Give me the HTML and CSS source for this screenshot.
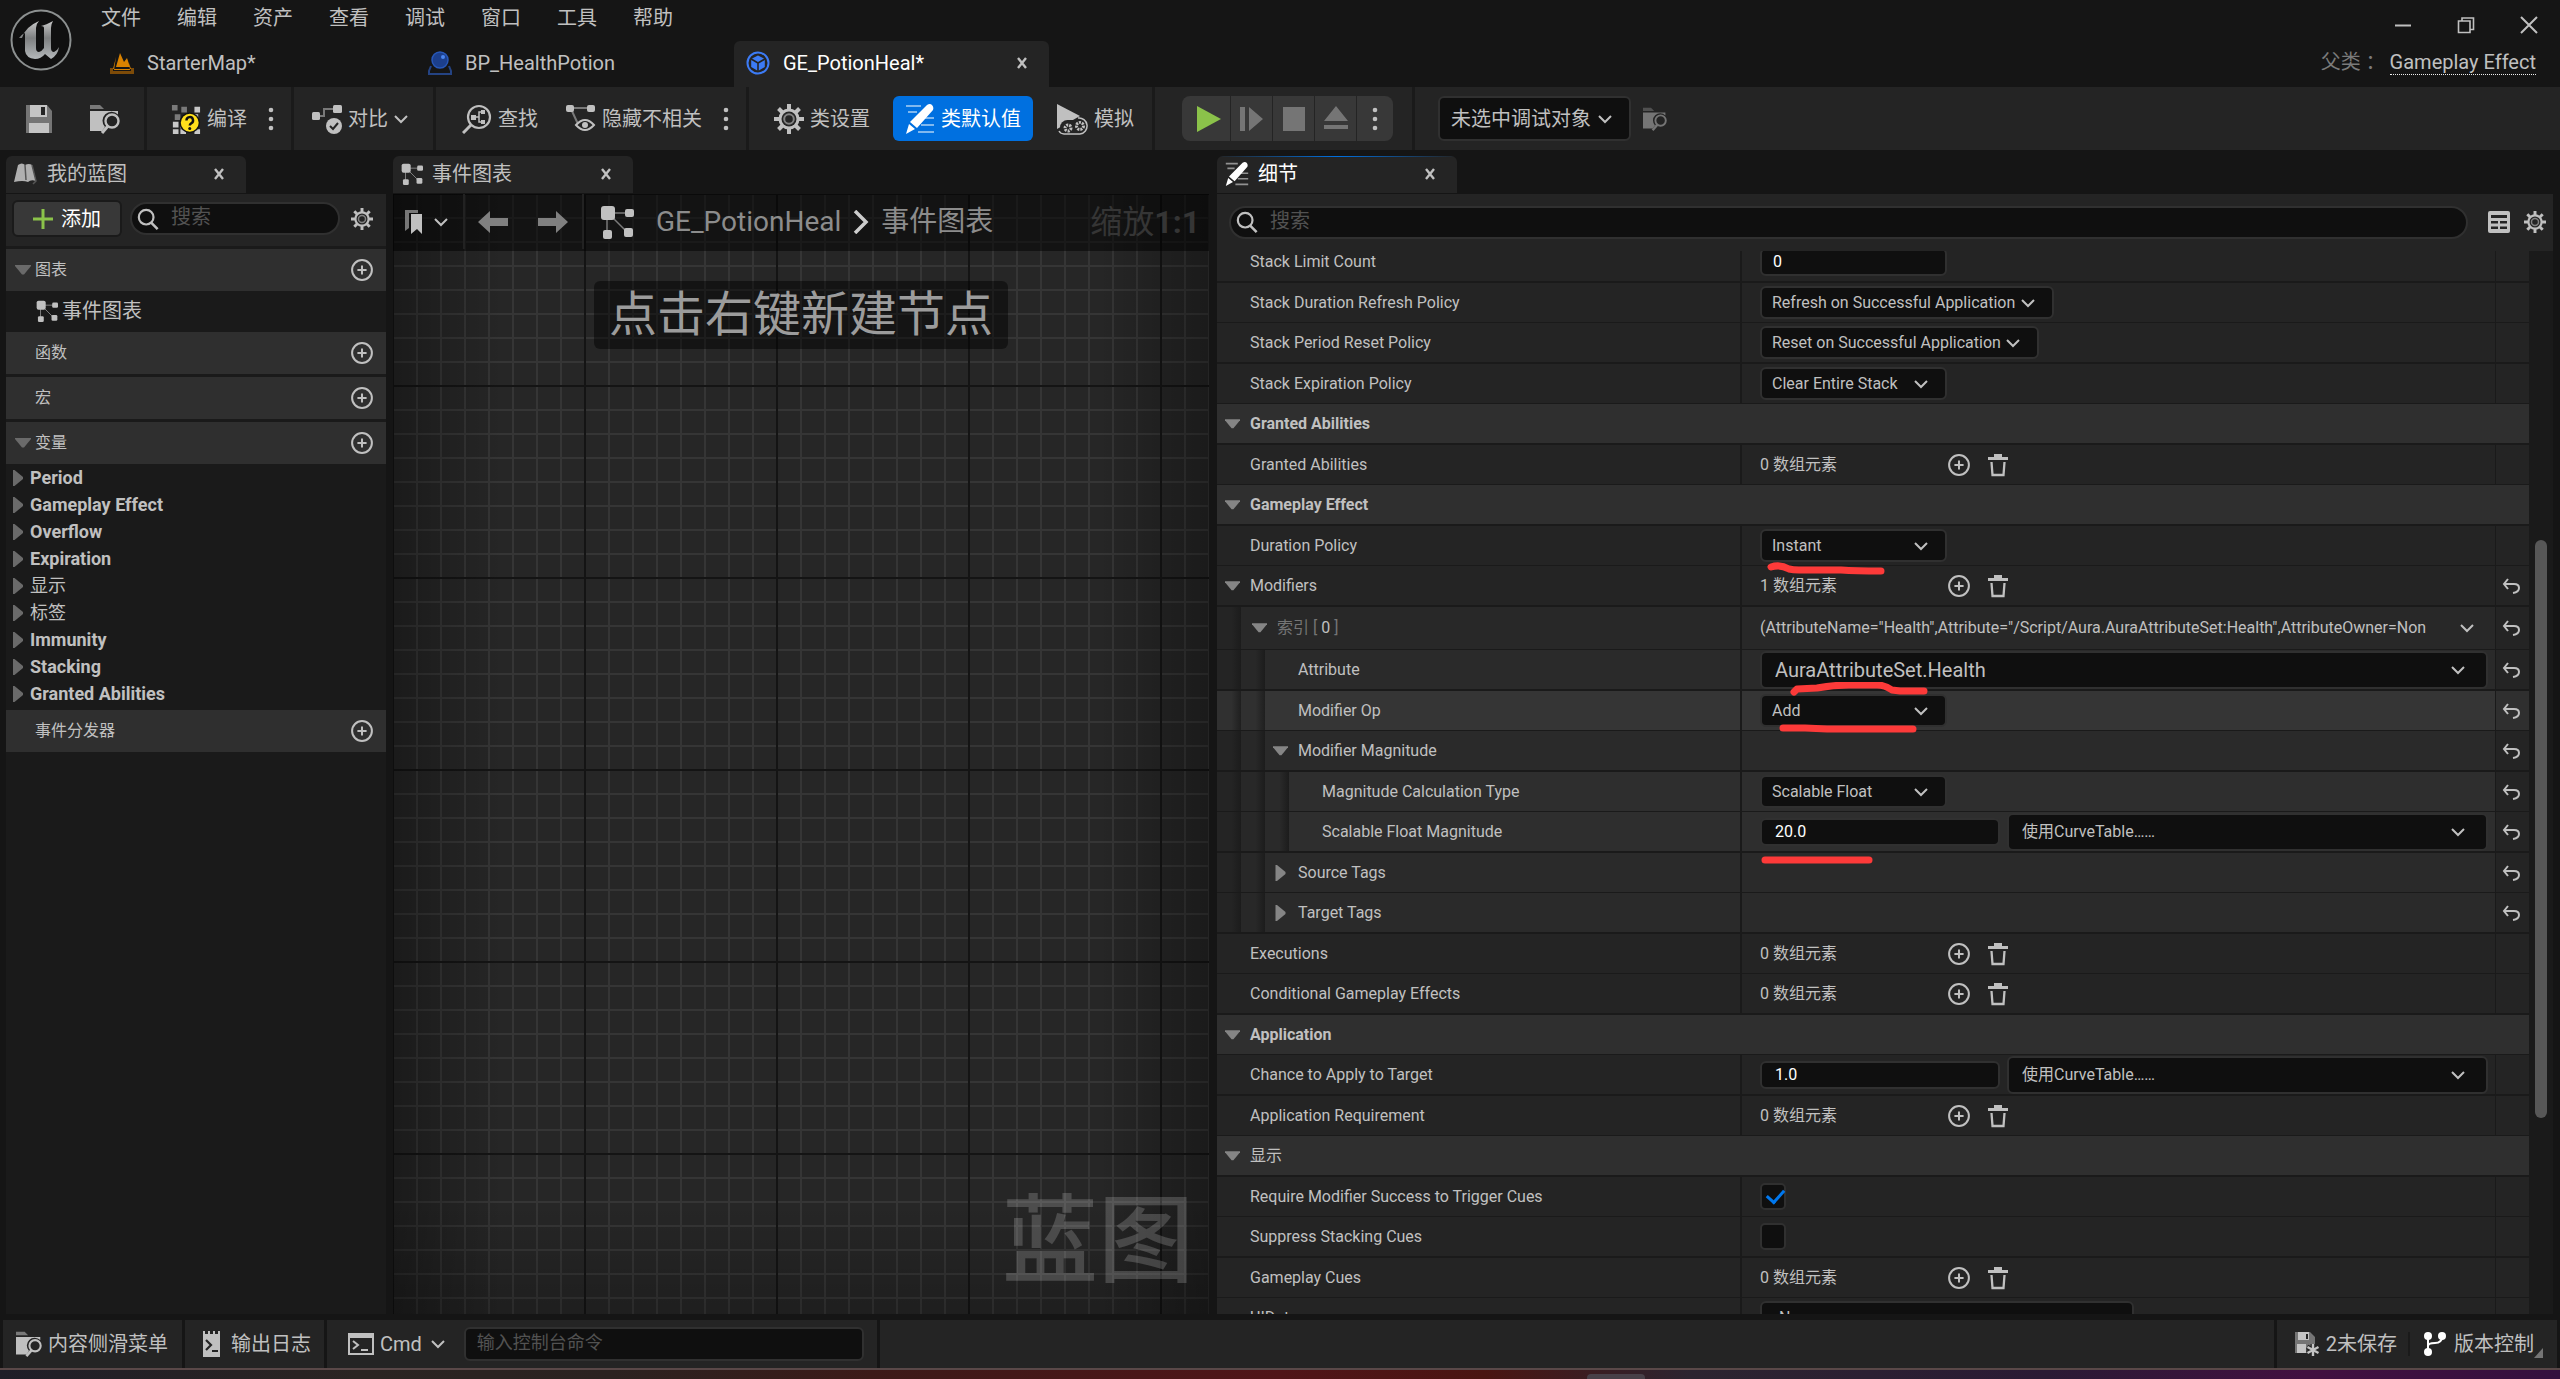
FILE: index.html
```html
<!DOCTYPE html>
<html lang="zh-CN">
<head>
<meta charset="utf-8">
<title>GE_PotionHeal</title>
<link rel="stylesheet" href="styles.css">
</head>
<body>
<svg class="defs" aria-hidden="true">
  <defs>
    <linearGradient id="steel" x1="0" y1="0" x2="0" y2="1"><stop offset="0" stop-color="#c8c8c8"/><stop offset=".45" stop-color="#7d7f80"/><stop offset="1" stop-color="#b4b8ba"/></linearGradient>
    <symbol id="i-chev" viewBox="0 0 14 10"><path d="M1 2l6 6 6-6" fill="none" stroke="currentColor" stroke-width="2"/></symbol>
    <symbol id="i-x" viewBox="0 0 12 12"><path d="M2 1l8 10M10 1L2 11" fill="none" stroke="currentColor" stroke-width="2.4"/></symbol>
    <symbol id="i-dots" viewBox="0 0 8 24"><circle cx="4" cy="3" r="2.3"/><circle cx="4" cy="12" r="2.3"/><circle cx="4" cy="21" r="2.3"/></symbol>
    <symbol id="i-save" viewBox="0 0 30 30"><path d="M2 1h21l5 6v22H2z" fill="#757575"/><path d="M6 1h17v12H6z" fill="#c4c4c4"/><path d="M17 3h4v8h-4z" fill="#242424"/><path d="M5 19h20v10H5z" fill="#c4c4c4"/></symbol>
    <symbol id="i-browse" viewBox="0 0 30 30"><path d="M0 1h10l4 4H0z" opacity=".55"/><path d="M0 7h28v3.500a9 9 0 0 0-13 12.500l-3 4H0z"/><circle cx="22" cy="17" r="6.500" fill="none" stroke="currentColor" stroke-width="2.400"/><path d="M18 22l-6 7" stroke="currentColor" stroke-width="3"/></symbol>
    <symbol id="i-compile" viewBox="0 0 30 32"><g fill="#7a7a7a"><path d="M0 1h6v6H0zM10 3h6v6h-6zM3 11h6v6H3z"/></g><g fill="#c8c8c8"><path d="M24 3h6v6h-6zM1 19h6v6H1zM1 27h6v5H1zM9 21h5v5H9zM9 27h6v5H9zM22 11h6v5h-6zM24 27h6v5h-6z"/></g><circle cx="19" cy="20" r="11" fill="#111"/><circle cx="19" cy="20" r="9.500" fill="#ffdf1b"/><path d="M15.500 17.500a3.500 3.500 0 1 1 5 3.100q-1.500.8-1.500 2.400" fill="none" stroke="#111" stroke-width="2.600"/><circle cx="19" cy="26" r="1.600" fill="#111"/></symbol>
    <symbol id="i-diff" viewBox="0 0 30 30"><path d="M7 12h5V5h9" fill="none" stroke="currentColor" opacity=".55" stroke-width="2"/><rect x="0" y="8" width="8" height="8" rx="1.500"/><rect x="21" y="1" width="9" height="8" rx="1.500"/><circle cx="22" cy="22" r="8"/><path d="M18 22l3 3 5-6" fill="none" stroke="#242424" stroke-width="2"/></symbol>
    <symbol id="i-find" viewBox="0 0 30 30"><circle cx="17" cy="13" r="11" fill="none" stroke="currentColor" stroke-width="2.200"/><path d="M9 21l-8 8" stroke="currentColor" stroke-width="3"/><rect x="9" y="11" width="5" height="5"/><path d="M14 13h3M21 8h-4v10h4" fill="none" stroke="currentColor" stroke-width="1.500"/><path d="M19 6h4v4h-4zM19 16h4v4h-4z"/></symbol>
    <symbol id="i-hide" viewBox="0 0 30 30"><path d="M4 4h20M5 5l7 15" stroke="currentColor" stroke-width="2" opacity=".55"/><rect x="0" y="1" width="8" height="7" rx="2"/><rect x="21" y="1" width="8" height="7" rx="2"/><path d="M10 21q9-10 18 0q-9 10-18 0z" fill="none" stroke="currentColor" stroke-width="2"/><circle cx="19" cy="21" r="3"/></symbol>
    <symbol id="i-gear" viewBox="0 0 30 30"><g stroke="currentColor" stroke-width="4"><path d="M15 0v30M0 15h30M4.500 4.500l21 21M25.500 4.500l-21 21"/></g><circle cx="15" cy="15" r="10.500"/><circle cx="15" cy="15" r="7.500" fill="#242424"/><circle cx="15" cy="15" r="4.800" fill="none" stroke="currentColor" stroke-width="2" opacity=".6"/></symbol>
    <symbol id="i-pen" viewBox="0 0 30 30"><path d="M1 2h15M3 8h9M20 14h9M16 21h13M13 28h16" stroke="currentColor" stroke-width="2" opacity=".5"/><path d="M22 1q3-2 5 0t1 5L12 24l-7-6zM4 20l6 5-9 5z"/></symbol>
    <symbol id="i-sim" viewBox="0 0 32 32"><path d="M1 1l23 12L1 26z"/><rect x="4" y="17" width="28" height="15" rx="7.500" fill="#242424"/><path d="M22 15a8 8 0 1 1 2 16H8a6 6 0 0 1-5-3" fill="none" stroke="currentColor" stroke-width="1.500"/><circle cx="24" cy="23" r="3.500" fill="none" stroke="currentColor" stroke-width="3" stroke-dasharray="2 1"/><circle cx="12" cy="25" r="3" fill="none" stroke="currentColor" stroke-width="3" stroke-dasharray="2 1"/></symbol>
    <symbol id="i-graph" viewBox="0 0 34 34"><path d="M8 8h20M7 8v22M8 8l20 20" stroke="currentColor" stroke-width="1.500" opacity=".6"/><rect x="1" y="1" width="14" height="14" rx="3"/><rect x="25" y="4" width="9" height="8" rx="2"/><rect x="3" y="25" width="9" height="9" rx="2"/><rect x="24" y="23" width="9" height="9" rx="2"/></symbol>
    <symbol id="i-search" viewBox="0 0 24 24"><circle cx="10" cy="10" r="8" fill="none" stroke="currentColor" stroke-width="2.400"/><path d="M15.500 16l7 7" stroke="currentColor" stroke-width="2.800"/></symbol>
    <symbol id="i-add" viewBox="0 0 24 24"><circle cx="12" cy="12" r="10.800" fill="none" stroke="currentColor" stroke-width="2.200"/><path d="M12 7v10M7 12h10" stroke="currentColor" stroke-width="2.200"/></symbol>
    <symbol id="i-trash" viewBox="0 0 20 24"><path d="M6 1h8v3H6zM0 4h20v3H0z"/><path d="M3.500 9l1 13h11l1-13" fill="none" stroke="currentColor" stroke-width="2.300"/></symbol>
    <symbol id="i-reset" viewBox="0 0 18 16"><path d="M6 1L2 6l4 5M2 6h10q5 0 5 4t-6 5" fill="none" stroke="currentColor" stroke-width="2"/></symbol>
    <symbol id="i-down" viewBox="0 0 16 10"><path d="M0 0h16v1L9 9.500H7L0 1z"/></symbol>
    <symbol id="i-right" viewBox="0 0 10 16"><path d="M0 0h1.500L10 7v2l-8.500 7H0z"/></symbol>
    <symbol id="i-table" viewBox="0 0 22 22"><rect x="0" y="0" width="22" height="22" rx="2"/><path d="M3 4h16v3H3zM3 10h7v2.500H3zM12 10h7v2.500h-7zM3 15.500h7V18H3zM12 15.500h7V18h-7z" fill="#242424"/></symbol>
    <symbol id="i-arrow" viewBox="0 0 30 24"><path d="M0 12L12 1v7h18v8H12v7z"/></symbol>
  </defs>
</svg>

<header class="titlebar">
  <svg class="logo" viewBox="0 0 64 64" role="img" aria-label="Unreal"><circle cx="32" cy="32" r="29.500" fill="#101010" stroke="#8c9090" stroke-width="2"/><path fill="url(#steel)" d="M13 30Q16 19 30 13q-3 3-3 7v20q0 4 3 4 3-1 5-4V20q0-2-3-2 5-1 12-5-2 3-2 7v20q0 4 3 4 3-1 5-5-1 8-8 12l-6-5q-4 5-10 5-9-1-10-8V25q-3 1-6 5z"/></svg>
  <div class="title-main">
    <nav class="menu"><a href="#">文件</a><a href="#">编辑</a><a href="#">资产</a><a href="#">查看</a><a href="#">调试</a><a href="#">窗口</a><a href="#">工具</a><a href="#">帮助</a></nav>
    <div class="doc-tabs">
      <button class="doc-tab"><svg class="ic24" viewBox="0 0 24 24"><path d="M6 16L10 2l4 9 3-4 3 9z" fill="#d98200"/><path d="M6 6v0l-3 12h18l-2-6 1 7H4z" fill="#d98200"/><path d="M0 17h3v3h18v-3h3v6H0z" fill="#7d4b08"/></svg><span>StarterMap*</span></button>
      <button class="doc-tab"><svg class="ic24" viewBox="0 0 24 24"><path d="M3 15L1 20v3h22v-3l-2-5" fill="none" stroke="#244383" stroke-width="2"/><circle cx="12" cy="9" r="8" fill="#1c3f8c" stroke="#2757b8" stroke-width="1.500"/><circle cx="15" cy="6" r="2" fill="#4a86ef"/></svg><span>BP_HealthPotion</span></button>
      <button class="doc-tab active"><svg class="ic24" viewBox="0 0 24 24"><circle cx="12" cy="12" r="10.500" fill="none" stroke="#3c7bf5" stroke-width="2"/><path d="M12 4.500l6 3-6 3.500-6-3.500zM5.200 9l6 3.500v7l-6-3.500zM18.800 9l-6 3.500v7l6-3.500z" fill="#3c7bf5"/></svg><span>GE_PotionHeal*</span><svg class="close" viewBox="0 0 12 12"><use href="#i-x"/></svg></button>
    </div>
  </div>
  <div class="title-right">
    <div class="win-buttons">
      <button aria-label="最小化"><svg viewBox="0 0 18 18"><path d="M1 9.500h16" stroke="currentColor" stroke-width="2"/></svg></button>
      <button aria-label="还原"><svg viewBox="0 0 18 18"><path d="M1.500 5h11.500v11.500H1.500zM5 5V2h11.500v11.500H13" fill="none" stroke="currentColor" stroke-width="1.600"/></svg></button>
      <button aria-label="关闭"><svg viewBox="0 0 18 18"><path d="M1 1l16 16M17 1L1 17" stroke="currentColor" stroke-width="2"/></svg></button>
    </div>
    <div class="parent-class"><span>父类 ：</span><a href="#">Gameplay Effect</a></div>
  </div>
</header>

<div class="toolbar">
  <div class="tg tg-file"><button aria-label="保存"><svg class="ic30"><use href="#i-save"/></svg></button><button aria-label="浏览"><svg class="ic30"><use href="#i-browse"/></svg></button></div>
  <div class="tg tg-compile"><button><svg class="ic30"><use href="#i-compile"/></svg>编译</button><button aria-label="编译选项"><svg class="dots"><use href="#i-dots"/></svg></button></div>
  <div class="tg tg-diff"><button><svg class="ic30"><use href="#i-diff"/></svg>对比<svg class="chev"><use href="#i-chev"/></svg></button></div>
  <div class="tg tg-find"><button><svg class="ic30"><use href="#i-find"/></svg>查找</button><button class="hide"><svg class="ic30"><use href="#i-hide"/></svg>隐藏不相关</button><button aria-label="隐藏选项"><svg class="dots"><use href="#i-dots"/></svg></button></div>
  <div class="tg tg-class"><button><svg class="ic30"><use href="#i-gear"/></svg>类设置</button><button class="primary"><svg class="ic30"><use href="#i-pen"/></svg>类默认值</button><button><svg class="ic32"><use href="#i-sim"/></svg>模拟</button></div>
  <div class="tg tg-play"><div class="play-group">
    <button class="play" aria-label="播放"><svg viewBox="0 0 26 26"><path d="M1 0l24 13L1 26z"/></svg></button>
    <button aria-label="单步"><svg viewBox="0 0 26 26"><path d="M1 1h5v24H1zM10 1l14 12-14 12z"/></svg></button>
    <button aria-label="停止"><svg viewBox="0 0 26 26"><path d="M2 1h22v24H2z"/></svg></button>
    <button aria-label="弹出"><svg viewBox="0 0 26 26"><path d="M13 0l12 15H1zM1 19h24v4H1z"/></svg></button>
    <button class="more" aria-label="播放选项"><svg class="dots"><use href="#i-dots"/></svg></button>
  </div></div>
  <div class="tg tg-debug"><span class="combo debug-combo"><select aria-label="调试对象"><option>未选中调试对象</option></select><svg class="chev"><use href="#i-chev"/></svg></span><button class="dim" aria-label="浏览调试对象"><svg class="ic24"><use href="#i-browse"/></svg></button></div>
</div>

<main class="panels">
  <section class="blueprint">
    <div class="panel-tab"><svg class="ic24" viewBox="0 0 24 24"><path d="M4 3q4-3 7 0q4-2 7 0l4 16q-5-2-8 1q-5-2-14 0z" fill="#b0b0b0"/><path d="M11 3l1 15M18 3l4 16-3 3" stroke="#555" stroke-width="1.500" fill="none"/></svg><span>我的蓝图</span><button class="tab-x" aria-label="关闭"><svg class="close"><use href="#i-x"/></svg></button></div>
    <div class="bp-body">
      <div class="bp-tools"><button class="add"><svg viewBox="0 0 20 20"><path d="M10 0v20M0 10h20" stroke="#8bc24a" stroke-width="3"/></svg>添加</button><label class="search"><svg class="ic22"><use href="#i-search"/></svg><input type="text" placeholder="搜索" aria-label="搜索"></label><button class="gear" aria-label="设置"><svg class="ic22"><use href="#i-gear"/></svg></button></div>
      <div class="bp-head gap"><svg class="tri-d"><use href="#i-down"/></svg><span>图表</span><button aria-label="添加"><svg class="ic22"><use href="#i-add"/></svg></button></div>
      <div class="bp-graph"><svg class="ic22"><use href="#i-graph"/></svg><span>事件图表</span></div>
      <div class="bp-head"><i class="tri-d"></i><span>函数</span><button aria-label="添加"><svg class="ic22"><use href="#i-add"/></svg></button></div>
      <div class="bp-head gap"><i class="tri-d"></i><span>宏</span><button aria-label="添加"><svg class="ic22"><use href="#i-add"/></svg></button></div>
      <div class="bp-head gap"><svg class="tri-d"><use href="#i-down"/></svg><span>变量</span><button aria-label="添加"><svg class="ic22"><use href="#i-add"/></svg></button></div>
      <ul class="vars">
        <li><svg><use href="#i-right"/></svg>Period</li>
        <li><svg><use href="#i-right"/></svg>Gameplay Effect</li>
        <li><svg><use href="#i-right"/></svg>Overflow</li>
        <li><svg><use href="#i-right"/></svg>Expiration</li>
        <li class="cjk"><svg><use href="#i-right"/></svg>显示</li>
        <li class="cjk"><svg><use href="#i-right"/></svg>标签</li>
        <li><svg><use href="#i-right"/></svg>Immunity</li>
        <li><svg><use href="#i-right"/></svg>Stacking</li>
        <li><svg><use href="#i-right"/></svg>Granted Abilities</li>
      </ul>
      <div class="bp-head"><i class="tri-d"></i><span>事件分发器</span><button aria-label="添加"><svg class="ic22"><use href="#i-add"/></svg></button></div>
    </div>
  </section>

  <section class="graph">
    <div class="panel-tab"><svg class="ic22"><use href="#i-graph"/></svg><span>事件图表</span><button class="tab-x" aria-label="关闭"><svg class="close"><use href="#i-x"/></svg></button></div>
    <div class="canvas">
      <div class="graph-bar">
        <button class="bookmark" aria-label="书签"><svg class="bm" viewBox="0 0 18 24"><path d="M0 0h13v3H4v15l-4 3z" fill="#777"/><path d="M6 4h11v20l-5-5-6 5z"/></svg><svg class="chev"><use href="#i-chev"/></svg></button>
        <div class="nav"><button aria-label="后退"><svg><use href="#i-arrow"/></svg></button><button class="fwd" aria-label="前进"><svg><use href="#i-arrow"/></svg></button></div>
        <svg class="ic34"><use href="#i-graph"/></svg>
        <span class="crumb">GE_PotionHeal</span>
        <svg class="crumb-sep" viewBox="0 0 16 24"><path d="M2 1l11 11L2 23" fill="none" stroke="currentColor" stroke-width="3.500"/></svg>
        <span class="crumb">事件图表</span>
        <span class="zoom">缩放<b>1:1</b></span>
      </div>
      <div class="hint">点击右键新建节点</div>
      <div class="watermark">蓝图</div>
    </div>
  </section>

  <section class="details">
    <div class="panel-tab focus"><svg class="ic24"><use href="#i-pen"/></svg><span>细节</span><button class="tab-x" aria-label="关闭"><svg class="close"><use href="#i-x"/></svg></button></div>
    <div class="det-search"><label class="search"><svg class="ic22"><use href="#i-search"/></svg><input type="text" placeholder="搜索" aria-label="搜索细节"></label><button aria-label="属性矩阵"><svg class="ic22"><use href="#i-table"/></svg></button><button aria-label="设置"><svg class="ic22"><use href="#i-gear"/></svg></button></div>
    <div class="det-body">
      <div class="rows">
        <div class="row"><div class="name"><label for="f1">Stack Limit Count</label></div><div class="val"><input class="num short" id="f1" type="text" value="0"></div><div class="rst"></div></div>
        <div class="row"><div class="name"><label for="f2">Stack Duration Refresh Policy</label></div><div class="val"><span class="combo w-a"><select id="f2"><option>Refresh on Successful Application</option></select><svg class="chev"><use href="#i-chev"/></svg></span></div><div class="rst"></div></div>
        <div class="row"><div class="name"><label for="f3">Stack Period Reset Policy</label></div><div class="val"><span class="combo w-b"><select id="f3"><option>Reset on Successful Application</option></select><svg class="chev"><use href="#i-chev"/></svg></span></div><div class="rst"></div></div>
        <div class="row"><div class="name"><label for="f4">Stack Expiration Policy</label></div><div class="val"><span class="combo"><select id="f4"><option>Clear Entire Stack</option></select><svg class="chev"><use href="#i-chev"/></svg></span></div><div class="rst"></div></div>
        <div class="row cat"><svg class="exp"><use href="#i-down"/></svg><span>Granted Abilities</span></div>
        <div class="row"><div class="name"><span>Granted Abilities</span></div><div class="val arr"><span>0 数组元素</span><button aria-label="添加"><svg class="ic22"><use href="#i-add"/></svg></button><button aria-label="清空"><svg class="trash"><use href="#i-trash"/></svg></button></div><div class="rst"></div></div>
        <div class="row cat"><svg class="exp"><use href="#i-down"/></svg><span>Gameplay Effect</span></div>
        <div class="row"><div class="name"><label for="f5">Duration Policy</label></div><div class="val"><span class="combo"><select id="f5"><option>Instant</option></select><svg class="chev"><use href="#i-chev"/></svg></span><svg class="mark m1" viewBox="0 0 120 14"><path d="M5 5q9-3 18 2q4 1 10 1h42q14 1 40 1"/></svg></div><div class="rst"></div></div>
        <div class="row"><div class="name"><svg class="exp"><use href="#i-down"/></svg><span>Modifiers</span></div><div class="val arr"><span>1 数组元素</span><button aria-label="添加"><svg class="ic22"><use href="#i-add"/></svg></button><button aria-label="清空"><svg class="trash"><use href="#i-trash"/></svg></button></div><div class="rst"><button aria-label="重置"><svg><use href="#i-reset"/></svg></button></div></div>
        <div class="row l1 index"><div class="name"><i class="gut"></i><svg class="exp"><use href="#i-down"/></svg><span class="muted">索引 [ <b>0</b> ]</span></div><div class="val"><span class="struct">(AttributeName="Health",Attribute="/Script/Aura.AuraAttributeSet:Health",AttributeOwner=Non</span><svg class="chev"><use href="#i-chev"/></svg></div><div class="rst"><button aria-label="重置"><svg><use href="#i-reset"/></svg></button></div></div>
        <div class="row l2"><div class="name"><i class="gut"></i><i class="gut g2"></i><label for="f6">Attribute</label></div><div class="val"><span class="combo wide big"><select id="f6"><option>AuraAttributeSet.Health</option></select><svg class="chev"><use href="#i-chev"/></svg></span><svg class="mark m2" viewBox="0 0 144 14"><path d="M6 10l3-3 20-1q16-3 32-3h28q8 0 15 5l8 1h24"/></svg></div><div class="rst"><button aria-label="重置"><svg><use href="#i-reset"/></svg></button></div></div>
        <div class="row l2 hover"><div class="name"><i class="gut"></i><i class="gut g2"></i><label for="f7">Modifier Op</label></div><div class="val"><span class="combo"><select id="f7"><option>Add</option></select><svg class="chev"><use href="#i-chev"/></svg></span><svg class="mark m3" viewBox="0 0 144 14"><path d="M5 5h22l22 1h86"/></svg></div><div class="rst"><button aria-label="重置"><svg><use href="#i-reset"/></svg></button></div></div>
        <div class="row l2"><div class="name"><i class="gut"></i><i class="gut g2"></i><svg class="exp"><use href="#i-down"/></svg><span>Modifier Magnitude</span></div><div class="val"></div><div class="rst"><button aria-label="重置"><svg><use href="#i-reset"/></svg></button></div></div>
        <div class="row l3"><div class="name"><i class="gut"></i><i class="gut g2"></i><i class="gut g3"></i><label for="f8">Magnitude Calculation Type</label></div><div class="val"><span class="combo"><select id="f8"><option>Scalable Float</option></select><svg class="chev"><use href="#i-chev"/></svg></span></div><div class="rst"><button aria-label="重置"><svg><use href="#i-reset"/></svg></button></div></div>
        <div class="row l3"><div class="name"><i class="gut"></i><i class="gut g2"></i><i class="gut g3"></i><label for="f9">Scalable Float Magnitude</label></div><div class="val"><input class="num" id="f9" type="text" value="20.0"><span class="combo wide"><select aria-label="曲线表"><option>使用CurveTable……</option></select><svg class="chev"><use href="#i-chev"/></svg></span><svg class="mark m4" viewBox="0 0 120 14"><path d="M5 6h104"/></svg></div><div class="rst"><button aria-label="重置"><svg><use href="#i-reset"/></svg></button></div></div>
        <div class="row l2"><div class="name"><i class="gut"></i><i class="gut g2"></i><svg class="exp shut"><use href="#i-right"/></svg><span>Source Tags</span></div><div class="val"></div><div class="rst"><button aria-label="重置"><svg><use href="#i-reset"/></svg></button></div></div>
        <div class="row l2"><div class="name"><i class="gut"></i><i class="gut g2"></i><svg class="exp shut"><use href="#i-right"/></svg><span>Target Tags</span></div><div class="val"></div><div class="rst"><button aria-label="重置"><svg><use href="#i-reset"/></svg></button></div></div>
        <div class="row"><div class="name"><span>Executions</span></div><div class="val arr"><span>0 数组元素</span><button aria-label="添加"><svg class="ic22"><use href="#i-add"/></svg></button><button aria-label="清空"><svg class="trash"><use href="#i-trash"/></svg></button></div><div class="rst"></div></div>
        <div class="row"><div class="name"><span>Conditional Gameplay Effects</span></div><div class="val arr"><span>0 数组元素</span><button aria-label="添加"><svg class="ic22"><use href="#i-add"/></svg></button><button aria-label="清空"><svg class="trash"><use href="#i-trash"/></svg></button></div><div class="rst"></div></div>
        <div class="row cat"><svg class="exp"><use href="#i-down"/></svg><span>Application</span></div>
        <div class="row"><div class="name"><label for="f10">Chance to Apply to Target</label></div><div class="val"><input class="num" id="f10" type="text" value="1.0"><span class="combo wide"><select aria-label="曲线表"><option>使用CurveTable……</option></select><svg class="chev"><use href="#i-chev"/></svg></span></div><div class="rst"></div></div>
        <div class="row"><div class="name"><span>Application Requirement</span></div><div class="val arr"><span>0 数组元素</span><button aria-label="添加"><svg class="ic22"><use href="#i-add"/></svg></button><button aria-label="清空"><svg class="trash"><use href="#i-trash"/></svg></button></div><div class="rst"></div></div>
        <div class="row cat cjk"><svg class="exp"><use href="#i-down"/></svg><span>显示</span></div>
        <div class="row"><div class="name"><label for="f11">Require Modifier Success to Trigger Cues</label></div><div class="val"><input type="checkbox" id="f11" checked></div><div class="rst"></div></div>
        <div class="row"><div class="name"><label for="f12">Suppress Stacking Cues</label></div><div class="val"><input type="checkbox" id="f12"></div><div class="rst"></div></div>
        <div class="row"><div class="name"><span>Gameplay Cues</span></div><div class="val arr"><span>0 数组元素</span><button aria-label="添加"><svg class="ic22"><use href="#i-add"/></svg></button><button aria-label="清空"><svg class="trash"><use href="#i-trash"/></svg></button></div><div class="rst"></div></div>
        <div class="row"><div class="name"><label for="f13">UIData</label></div><div class="val"><span class="combo w-ui"><select id="f13"><option>None</option></select></span></div><div class="rst"></div></div>
      </div>
      <div class="scroll"><div class="thumb"></div></div>
    </div>
  </section>
</main>

<footer class="status">
  <button class="st drawer"><svg class="ic26"><use href="#i-browse"/></svg>内容侧滑菜单</button>
  <button class="st log"><svg class="ic26" viewBox="0 0 26 26"><path d="M4 0h2v3h3V0h2v3h3V0h2v3h3V0h2v26H4z"/><path d="M7 9l5 5-5 5M13 20h6" fill="none" stroke="#242424" stroke-width="2.200"/></svg>输出日志</button>
  <div class="st cmd"><button><svg class="ic26" viewBox="0 0 26 26"><path d="M1 3h24v20H1z" fill="none" stroke="currentColor" stroke-width="2"/><path d="M1 2h24v5H1z"/><path d="M5 10l5 4-5 4M13 19h7" fill="none" stroke="currentColor" stroke-width="2"/></svg>Cmd<svg class="chev"><use href="#i-chev"/></svg></button><input type="text" placeholder="输入控制台命令" aria-label="控制台命令"></div>
  <div class="st-right">
    <button><svg class="ic26" viewBox="0 0 26 26"><path d="M1 1h15l5 5v16H1z" fill="#757575"/><path d="M4 1h11v8H4zM3 13h9v9H3z" fill="#c4c4c4"/><path d="M12 3h2v5h-2z" fill="#242424"/><path d="M19 13v12M13 16l12 6M25 16l-12 6" stroke="#242424" stroke-width="5"/><path d="M19 13v12M13.500 16l11 6M24.500 16l-11 6" stroke="#c4c4c4" stroke-width="2.400"/></svg>2未保存</button>
    <button class="vc"><svg class="ic26" viewBox="0 0 26 26"><g fill="#fff"><circle cx="6" cy="5" r="4"/><circle cx="20" cy="5" r="4"/><circle cx="6" cy="21" r="4"/></g><path d="M6 5v16M6 15q0-3 7-3 7 0 7-7" fill="none" stroke="#fff" stroke-width="2"/></svg>版本控制<svg class="corner" viewBox="0 0 9 10"><path d="M9 0v10H0z"/></svg></button>
  </div>
</footer>
<div class="desktop"><i></i></div>
</body>
</html>
```
FILE: styles.css
```css
* { box-sizing: border-box; }
html, body { height: 100%; }
body {
  margin: 0; display: flex; flex-direction: column; overflow: hidden;
  background: #151515; color: #c0c0c0; fill: currentColor;
  font: 20px/24px Roboto, "Noto Sans CJK SC", sans-serif;
}
button, input, select { font: inherit; color: inherit; background: none; border: 0; padding: 0; margin: 0; border-radius: 0; outline: 0; }
button { display: flex; align-items: center; white-space: nowrap; }
a { color: inherit; text-decoration: none; }
svg { flex: none; display: block; }
.defs { position: absolute; width: 0; height: 0; }
.ic22 { width: 22px; height: 22px; }
.ic24 { width: 24px; height: 24px; }
.ic26 { width: 26px; height: 26px; }
.ic30 { width: 30px; height: 30px; }
.ic32 { width: 32px; height: 32px; }
.ic34 { width: 34px; height: 34px; }
.chev { width: 14px; height: 10px; }
.dots { width: 8px; height: 24px; }
.close { width: 12px; height: 12px; }
input::placeholder { color: #525252; opacity: 1; }

/* title bar */
.titlebar { display: flex; height: 87px; flex: none; }
.logo { width: 64px; height: 64px; margin: 8px 25px 0 9px; }
.title-main { flex: 1; }
.menu { display: flex; gap: 36px; height: 41px; padding: 6px 0 0 3px; }
.doc-tabs { display: flex; gap: 3px; }
.doc-tab { width: 315px; height: 46px; padding: 0 21px 2px 12px; gap: 13px; }
.doc-tab.active { background: #242424; color: #fff; border-radius: 6px 6px 0 0; }
.doc-tab .close { margin-left: auto; color: #c0c0c0; }
.title-right { padding: 16px 22px 0 0; display: flex; flex-direction: column; align-items: flex-end; gap: 16px; }
.win-buttons { display: flex; gap: 45px; }
.win-buttons svg { width: 18px; height: 18px; }
.parent-class { display: flex; }
.parent-class span { color: #7a7a7a; padding-right: 4px; }
.parent-class a { border-bottom: 1px dotted #eee; height: 25px; margin-right: 2px; }

/* toolbar */
.toolbar { display: flex; flex: none; height: 63px; background: #242424; }
.tg { display: flex; align-items: center; border-right: 3px solid #1a1a1a; }
.tg button { gap: 6px; }
.tg-file { padding: 0 24px; gap: 36px; }
.tg-compile { padding: 0 16px 0 24px; gap: 20px; }
.tg-diff { padding: 0 25px 0 18px; }
.tg-find { padding: 0 16px 0 26px; gap: 20px; }
.tg-find .hide { margin-left: 8px; }
.tg-class { padding: 0 18px 0 25px; gap: 23px; }
.primary { background: #0070e0; color: #fff; border-radius: 6px; height: 45px; padding: 0 12px; }
.tg-play { padding: 0 19px 0 27px; }
.play-group { display: flex; gap: 1px; height: 45px; border-radius: 8px; overflow: hidden; }
.play-group button { background: #383838; width: 41px; justify-content: center; color: #757575; }
.play-group svg { width: 26px; height: 26px; }
.play-group .play { width: 48px; padding-left: 6px; color: #8bc24a; }
.play-group .more { width: 36px; color: #c0c0c0; }
.play-group .dots { width: 8px; height: 24px; }
.tg-debug { padding-left: 23px; gap: 12px; border: 0; }
.dim { color: #757575; }

.combo { position: relative; display: block; width: 187px; height: 33px; }
.combo select { appearance: none; width: 100%; height: 100%; background: #0f0f0f; border: 2px solid #303030; border-radius: 6px; padding: 0 24px 0 10px; }
.combo .chev { position: absolute; right: 19px; top: 50%; margin-top: -5px; pointer-events: none; }
.debug-combo { width: 193px; height: 45px; }
.debug-combo select { padding: 0 20px 0 11px; }

/* panels */
.panels { flex: 1; min-height: 0; display: flex; padding: 6px 7px 6px 6px; }
.panels section { display: flex; flex-direction: column; min-width: 0; min-height: 0; }
.panel-tab { width: 240px; height: 37px; flex: none; margin-bottom: 1px; display: flex; align-items: center; background: #242424; border-radius: 6px 6px 0 0; padding: 0 21px 2px 8px; gap: 9px; }
.tab-x { margin-left: auto; }
.focus { color: #fff; background: linear-gradient(90deg, transparent, #0070e0, transparent) top / 100% 1px no-repeat #242424; }
.focus .tab-x { color: #c0c0c0; }
.search { display: flex; align-items: center; gap: 12px; flex: 1; min-width: 0; height: 33px; background: #0f0f0f; border: 2px solid #303030; border-radius: 17px; padding: 0 5px; }
.search input { flex: 1; min-width: 0; height: 29px; padding-bottom: 3px; }

.blueprint { width: 380px; flex: none; margin-right: 7px; }
.bp-body { flex: 1; background: #1a1a1a; }
.bp-tools { display: flex; align-items: center; height: 52px; padding: 0 13px 3px 6px; background: #242424; gap: 8px; }
.bp-tools .gear { margin-left: 3px; }
.add { width: 110px; height: 37px; background: #383838; border: 2px solid #1a1a1a; border-radius: 6px; color: #fff; justify-content: center; gap: 8px; }
.add svg { width: 20px; height: 20px; }
.bp-head { display: flex; align-items: center; height: 42px; padding: 0 13px 0 9px; gap: 4px; background: #2f2f2f; font-size: 16px; }
.bp-head.gap { margin-top: 3px; }
.bp-head button { margin-left: auto; }
.tri-d { width: 16px; height: 10px; color: #6a6a6a; }
.bp-graph { display: flex; align-items: center; height: 41px; padding: 0 0 2px 30px; gap: 4px; }
.vars { list-style: none; margin: 0; padding: 0 0 3px 7px; font-size: 18px; font-weight: 700; }
.vars li { display: flex; align-items: center; height: 27px; gap: 7px; }
.vars .cjk { font-weight: 400; }
.vars svg { width: 10px; height: 16px; color: #6a6a6a; }

.graph { flex: 816; margin-right: 8px; }
.canvas {
  flex: 1; min-height: 0; position: relative; background-color: #262626;
  background-image:
    linear-gradient(90deg, rgba(0, 0, 0, .3), transparent 110px), linear-gradient(270deg, rgba(0, 0, 0, .3), transparent 110px), linear-gradient(0deg, rgba(0, 0, 0, .2), transparent 110px),
    linear-gradient(90deg, #141414 2px, transparent 2px), linear-gradient(#141414 2px, transparent 2px),
    linear-gradient(90deg, #353535 2px, transparent 2px), linear-gradient(#353535 2px, transparent 2px);
  background-size: 100% 100%, 100% 100%, 100% 100%, 192px 192px, 192px 192px, 24px 24px, 24px 24px;
  background-position: 0 0, 0 0, 0 0, -1px -1px, -1px -1px, -1px -1px, -1px -1px;
}
.graph-bar { display: flex; align-items: center; height: 57px; padding-bottom: 2px; background: rgba(0, 0, 0, .5); }
.bookmark { width: 72px; height: 100%; padding-left: 12px; gap: 11px; border-right: 2px solid #222; }
.bm { width: 18px; height: 24px; }
.nav { display: flex; align-items: center; width: 119px; height: 100%; padding-left: 13px; gap: 30px; color: #808080; border-right: 2px solid #222; }
.nav svg { width: 30px; height: 24px; }
.nav .fwd svg { transform: scaleX(-1); }
.graph-bar .ic34 { margin: 0 22px 0 16px; }
.crumb { font-size: 28px; line-height: 32px; color: #8c8c8c; }
.crumb-sep { width: 16px; height: 24px; margin: 0 12px 0 12px; color: #ccc; }
.zoom { margin-left: auto; padding-right: 9px; font-size: 32px; line-height: 36px; color: #353535; }
.hint { width: max-content; margin: 30px auto 0; padding: 6px 15px; font-size: 48px; line-height: 56px; color: #9c9c9c; background: rgba(0, 0, 0, .45); border-radius: 6px; }
.watermark { position: absolute; right: 15px; bottom: 18px; font-size: 96px; line-height: 110px; font-weight: 500; color: rgba(255, 255, 255, .18); }

/* details */
.details { flex: 1336; }
.det-search { display: flex; align-items: center; height: 57px; flex: none; background: #242424; padding: 0 7px 1px 12px; }
.det-search button { margin-left: 14px; }
.det-search .search + button { margin-left: 20px; }
.det-body { flex: 1; min-height: 0; display: flex; overflow: hidden; background: #1a1a1a; font-size: 16px; }
.rows { flex: 1; min-width: 0; margin-top: -9px; }
.row { display: grid; grid-template-columns: minmax(0, 525fr) minmax(0, 754fr) 33px; height: 40px; border-bottom: 1px solid #1a1a1a; background: #242424; }
.row:nth-child(odd) { height: 41px; border-bottom-width: 2px; }
.row.index { height: 43px; }
.l1 { background: #282828; }
.l2 { background: #2a2a2a; }
.l3 { background: #2e2e2e; }
.hover { background: #353535; }
.row.cat { display: flex; align-items: center; background: #2f2f2f; font-weight: 700; }
.cat span { margin-left: 10px; }
.row.cat.cjk { font-weight: 400; }
.cat .exp { margin-left: 8px; }
.exp { width: 15px; height: 10px; color: #858585; }
.exp.shut { width: 15px; height: 16px; }
.name { display: flex; align-items: center; border-right: 2px solid #1a1a1a; white-space: nowrap; overflow: hidden; }
.name > label, .name > span { padding-left: 33px; }
.name .exp { margin-left: 8px; }
.name .exp + span { padding-left: 10px; }
.index .exp { margin-left: 11px; }
.gut { align-self: stretch; width: 24px; background: linear-gradient(90deg, #242424 60%, #1c1c1c); }
.g2 { background: linear-gradient(90deg, #282828 60%, #1c1c1c); }
.g3 { background: linear-gradient(90deg, #2a2a2a 60%, #1c1c1c); }
.hover .gut { background: linear-gradient(90deg, #303030 60%, #1f1f1f); }
.muted { color: #757575; }
.muted b { color: #c0c0c0; font-weight: 400; }
.val { position: relative; display: flex; align-items: center; min-width: 0; padding: 0 7px 0 18px; border-right: 1px solid #1a1a1a; }
.val .w-a { width: 294px; }
.val .w-b { width: 279px; }
.val .w-ui { width: 374px; }
.w-ui select { padding-left: 17px; }
.val .wide { width: auto; flex: 1; height: 38px; }
.wide select { padding-left: 13px; }
.wide .chev { right: 23px; }
.big { font-size: 20px; }
.num { width: 240px; height: 28px; margin-right: 7px; padding-left: 13px; color: #fff; background: #0f0f0f; border: 2px solid #303030; border-radius: 6px; }
.num.short { width: 187px; padding-left: 11px; }
.struct { flex: 1; white-space: nowrap; overflow: hidden; }
.index .chev { margin-right: 14px; }
.arr span { width: 188px; }
.arr button + button { margin-left: 18px; }
.trash { width: 20px; height: 24px; }
.rst { display: flex; align-items: center; padding-left: 6px; background: #242424; }
.hover .rst { background: #2f2f2f; }
.rst svg { width: 18px; height: 16px; }
input[type=checkbox] { appearance: none; width: 26px; height: 27px; margin: 0; background: #0f0f0f; border: 2px solid #303030; border-radius: 5px; }
input[type=checkbox]:checked::after { content: ""; display: block; width: 8px; height: 14px; margin: 1px 0 0 8px; border: solid #0078ef; border-width: 0 3px 3px 0; transform: rotate(42deg); }
.mark { position: absolute; z-index: 1; width: 144px; height: 14px; left: 24px; fill: none; stroke: #fd3a39; stroke-width: 7; stroke-linecap: round; stroke-linejoin: round; }
.m1, .m4 { width: 120px; }
.m1 { top: 36px; }
.m2 { left: 46px; top: 32px; }
.m3 { left: 36px; top: 32px; }
.m4 { left: 18px; top: 42px; }
.scroll { width: 24px; padding: 289px 6px 0; }
.thumb { height: 578px; border-radius: 6px; background: #575757; }

/* status bar */
.status { display: flex; flex: none; height: 48px; margin: 0 3px; background: #242424; }
.st { display: flex; align-items: center; height: 100%; border-right: 3px solid #151515; gap: 6px; }
.drawer { padding: 0 14px 0 13px; }
.log { padding: 0 13px 0 14px; }
.st .chev { margin-left: 3px; }
.cmd { padding: 0 13px 0 21px; gap: 19px; }
.cmd button, .st-right button { gap: 6px; }
.cmd input { width: 400px; height: 34px; padding: 0 0 3px 11px; font-size: 18px; background: #0f0f0f; border: 2px solid #303030; border-radius: 6px; }
.st-right { margin-left: auto; display: flex; align-items: center; border-left: 3px solid #151515; padding: 0 14px 0 17px; height: 100%; }
.vc { border-left: 2px solid #1a1a1a; margin-left: 11px; padding-left: 12px; height: 24px; }
.vc .corner { width: 9px; height: 10px; margin: 18px 0 0 -6px; color: #757575; }
.desktop { height: 11px; flex: none; border-top: 2px solid #5a4848; background: linear-gradient(90deg, #1f1e28, #2b2422 14%, #2b2220 24%, #3c1a18 34%, #501418 50%, #4a1512 58%, #2c2430 66%, #2a1a34 80%, #421040 90%, #34103e); }
.desktop i { display: block; width: 58px; height: 5px; margin: 4px 0 0 62%; border-radius: 4px 4px 0 0; background: #484048; }
```
